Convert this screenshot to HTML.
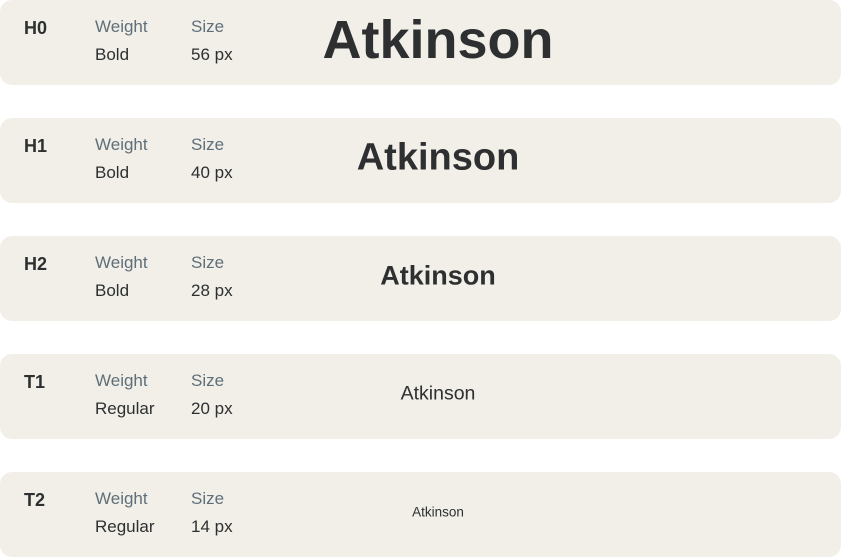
<!DOCTYPE html>
<html><head><style>
body{margin:0;width:841px;height:557px;background:#fff;font-family:"Liberation Sans",sans-serif;position:relative;overflow:hidden}
.c{position:absolute;left:0;width:841px;height:85px;background:#f1efe7;border-radius:12px}
.t{position:absolute;left:24px;top:18px;font-size:18px;font-weight:bold;color:#2d2f31}
.l{position:absolute;font-size:17px;color:#5f6f7a;top:17px}
.v{position:absolute;font-size:17px;color:#2d2f31;top:45px}
.a{position:absolute;left:438px;transform:translate(-50%,-50%);color:#2d2f31;white-space:nowrap;top:40px}
</style></head><body>
<div class="c" style="top:0"><div class="t">H0</div><div class="l" style="left:95px">Weight</div><div class="l" style="left:191px">Size</div><div class="v" style="left:95px">Bold</div><div class="v" style="left:191px">56 px</div><div class="a" style="font-size:54px;font-weight:bold">Atkinson</div></div>
<div class="c" style="top:118px"><div class="t">H1</div><div class="l" style="left:95px">Weight</div><div class="l" style="left:191px">Size</div><div class="v" style="left:95px">Bold</div><div class="v" style="left:191px">40 px</div><div class="a" style="font-size:38px;font-weight:bold">Atkinson</div></div>
<div class="c" style="top:236px"><div class="t">H2</div><div class="l" style="left:95px">Weight</div><div class="l" style="left:191px">Size</div><div class="v" style="left:95px">Bold</div><div class="v" style="left:191px">28 px</div><div class="a" style="font-size:27px;font-weight:bold">Atkinson</div></div>
<div class="c" style="top:354px"><div class="t">T1</div><div class="l" style="left:95px">Weight</div><div class="l" style="left:191px">Size</div><div class="v" style="left:95px">Regular</div><div class="v" style="left:191px">20 px</div><div class="a" style="font-size:19.5px">Atkinson</div></div>
<div class="c" style="top:472px"><div class="t">T2</div><div class="l" style="left:95px">Weight</div><div class="l" style="left:191px">Size</div><div class="v" style="left:95px">Regular</div><div class="v" style="left:191px">14 px</div><div class="a" style="font-size:13.5px">Atkinson</div></div>
</body></html>
